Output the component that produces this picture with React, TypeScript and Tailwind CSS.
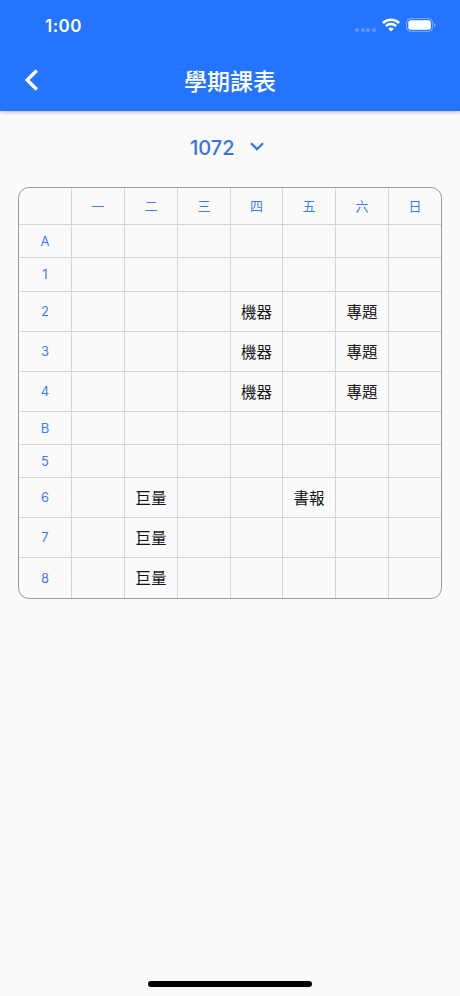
const DAYS = ['一', '二', '三', '四', '五', '六', '日'];

const SECTIONS = [
  { name: 'A', height: 'h-[33px]', courses: {} },
  { name: '1', height: 'h-[34px]', courses: {} },
  { name: '2', height: 'h-10', courses: { 四: '機器', 六: '專題' } },
  { name: '3', height: 'h-10', courses: { 四: '機器', 六: '專題' } },
  { name: '4', height: 'h-10', courses: { 四: '機器', 六: '專題' } },
  { name: 'B', height: 'h-[33px]', courses: {} },
  { name: '5', height: 'h-[33px]', courses: {} },
  { name: '6', height: 'h-10', courses: { 二: '巨量', 五: '書報' } },
  { name: '7', height: 'h-10', courses: { 二: '巨量' } },
  { name: '8', height: 'h-10', courses: { 二: '巨量' } },
] as { name: string; height: string; courses: Record<string, string> }[];

const ROW = 'grid grid-cols-[53px_53px_53px_53px_52px_53px_53px_52px]';
const CELL = 'flex items-center justify-center border-[#d5d5d5]';

function StatusBar() {
  return (
    <div className="flex h-[51px] items-center justify-between pl-[45px] pr-6">
      <span className="mt-px text-[17px] leading-none font-semibold tracking-[0.5px]">1:00</span>
      <div className="-mt-px flex items-center">
        <div className="mt-[9px] mr-[6px] flex gap-[1.6px]">
          {[0, 1, 2, 3].map(i => (
            <span key={i} className="size-1 rounded-[1.5px] bg-white/25" />
          ))}
        </div>
        <svg width="18" height="14" viewBox="0 0 18 14" className="mr-[6px]" fill="none" stroke="white" strokeWidth="2.5">
          <path d="M0.9 5A11.5 11.5 0 0 1 17.1 5" />
          <path d="M3.9 8.2A7.2 7.2 0 0 1 14.1 8.2" />
          <path d="M6.3 10.8A3.9 3.9 0 0 1 11.7 10.8L9 13.5Z" fill="white" stroke="none" />
        </svg>
        <svg width="30" height="14" viewBox="0 0 30 14">
          <rect x="0.6" y="0.6" width="26" height="12.8" rx="4" fill="none" stroke="white" strokeOpacity="0.4" />
          <rect x="2.3" y="2.3" width="22.6" height="9.4" rx="2.3" fill="white" />
          <path d="M28 4.8C30 5.6 30 8.4 28 9.2Z" fill="white" fillOpacity="0.45" />
        </svg>
      </div>
    </div>
  );
}

function Timetable() {
  return (
    <div className="mx-[18px] overflow-hidden rounded-[11px] border border-[#9c9c9c] text-[13px] leading-none text-[#3b7df5]">
      <div className={`${ROW} h-[37px]`}>
        <div className={`${CELL} border-r border-b`} />
        {DAYS.map(day => (
          <div key={day} className={`${CELL} border-r border-b last:border-r-0`}>{day}</div>
        ))}
      </div>
      {SECTIONS.map((section, i) => {
        const line = i < SECTIONS.length - 1 ? 'border-b' : '';
        return (
          <div key={section.name} className={`${ROW} ${section.height}`}>
            <div className={`${CELL} border-r ${line}`}>{section.name}</div>
            {DAYS.map(day => (
              <div key={day} className={`${CELL} border-r pt-0.5 last:border-r-0 text-[15.5px] text-[#151515] ${line}`}>
                {section.courses[day]}
              </div>
            ))}
          </div>
        );
      })}
    </div>
  );
}

export default function App() {
  return (
    <div
      lang="zh-Hant"
      className="flex h-[996px] w-[460px] flex-col overflow-hidden bg-[#fafafa] font-['Inter','Noto_Sans_CJK_TC',sans-serif]"
    >
      <header className="h-[111px] shrink-0 bg-[#2474ff] text-white shadow-[0_1px_4px_rgba(0,0,0,0.3)]">
        <StatusBar />
        <div className="grid h-[60px] grid-cols-[60px_1fr_60px] items-center">
          <button className="-mt-0.5 pl-[24px]" aria-label="返回">
            <svg width="15" height="22" viewBox="0 0 15 22" fill="none" stroke="white" strokeWidth="3.4">
              <path d="M12.8 1.5L3.2 11L12.8 20.5" />
            </svg>
          </button>
          <h1 className="pt-0.5 text-center text-[23px] leading-none font-medium">學期課表</h1>
        </div>
      </header>

      <button className="flex h-[76px] shrink-0 items-center pl-[190px] text-[#3374e6]">
        <span className="mt-[-3px] text-[20px] leading-none font-medium">1072</span>
        <svg width="14" height="9" viewBox="0 0 14 9" className="-mt-[5px] ml-[15px]" fill="none" stroke="currentColor" strokeWidth="2.3">
          <path d="M1 1.2L7 7.2L13 1.2" />
        </svg>
      </button>

      <Timetable />

      <div className="mx-auto mt-auto mb-[9px] h-[6px] w-[164px] rounded-full bg-black" />
    </div>
  );
}
